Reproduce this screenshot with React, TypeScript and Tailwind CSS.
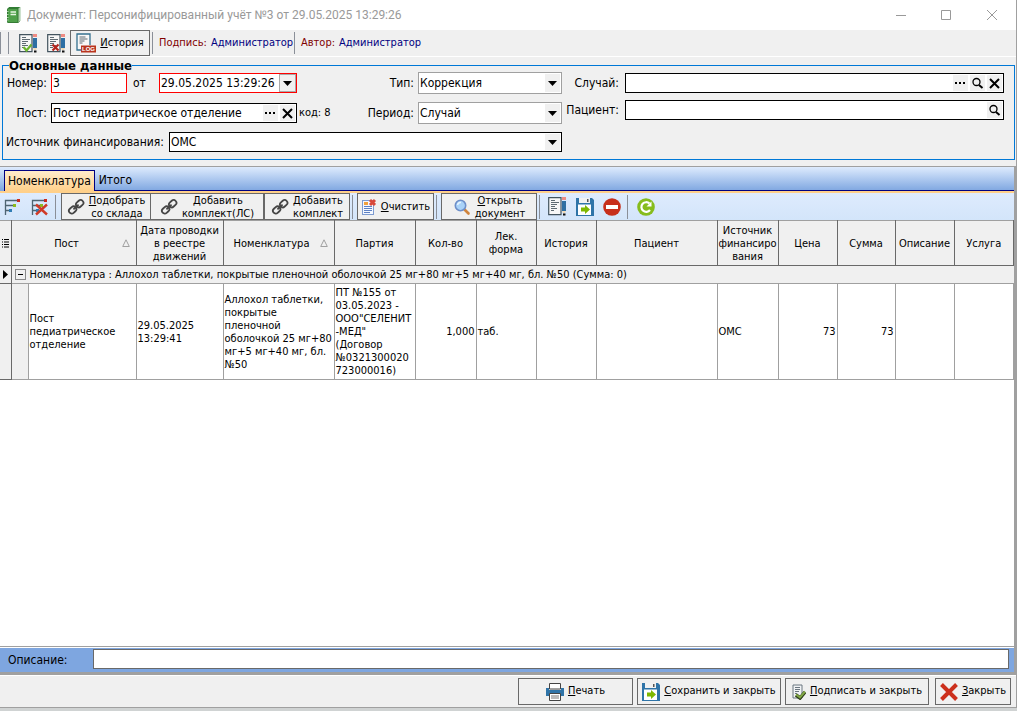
import { ReactNode, useState } from 'react';
import clsx from 'clsx';

interface Column {
    header: string;
    width: string;
    sorted?: boolean;
    align?: 'left' | 'right';
    value?: string;
}

const columns: Column[] = [
    { header: 'Пост', width: 'w-[125px]', sorted: true, value: 'Пост педиатрическое отделение' },
    { header: 'Дата проводки в реестре движений', width: 'w-[87px]', value: '29.05.2025 13:29:41' },
    { header: 'Номенклатура', width: 'w-[111px]', sorted: true, value: 'Аллохол таблетки,\nпокрытые\nпленочной\nоболочкой 25 мг+80\nмг+5 мг+40 мг, бл.\n№50' },
    { header: 'Партия', width: 'w-[81px]', value: 'ПТ №155 от\n03.05.2023 -\nООО"СЕЛЕНИТ\n-МЕД"\n(Договор\n№0321300020\n723000016)' },
    { header: 'Кол-во', width: 'w-[61px]', align: 'right', value: '1,000' },
    { header: 'Лек. форма', width: 'w-[60px]', value: 'таб.' },
    { header: 'История', width: 'w-[60px]' },
    { header: 'Пациент', width: 'w-[121px]' },
    { header: 'Источник\nфинансиро\nвания', width: 'w-[61px]', value: 'ОМС' },
    { header: 'Цена', width: 'w-[59px]', align: 'right', value: '73' },
    { header: 'Сумма', width: 'w-[58px]', align: 'right', value: '73' },
    { header: 'Описание', width: 'w-[59px]' },
    { header: 'Услуга', width: '' },
];

/* ---------- Icons ---------- */

function BookIcon() {
    return (
        <svg width="16" height="18" viewBox="0 0 16 18" className="shrink-0">
            <path d="M1.500 3l1.500-2h11v14l-2 2H1.500z" fill="#2f7d33" />
            <path d="M12 3l2-2v14l-2 2z" fill="#d8ecd5" stroke="#5c9a5a" strokeWidth=".6" />
            <rect x="1.500" y="2.500" width="10.500" height="14" rx="1" fill="#4fa04a" stroke="#357a35" />
            <path d="M4.500 6h5.500M4.500 8.500h5.500" stroke="#e6f5e2" strokeWidth="1.300" />
            <path d="M1 5.500h1.500M1 8.500h1.500M1 11.500h1.500M1 14h1.500" stroke="#cfe8cc" strokeWidth=".8" />
        </svg>
    );
}

function Sheet() {
    return (
        <>
            <path d="M.7.700h12.300v17H.7z" fill="#f7f7f7" stroke="#43545f" strokeWidth="1.200" />
            <path d="M3 3.500h4M3 5.500h8M3 7.500h6M3 9.500h4M3 11.500h6M3 13.500h3" stroke="#5f6b73" />
        </>
    );
}

function Pencil() {
    return (
        <>
            <path d="M14 0h4v3h-4z" fill="#ee8b83" />
            <path d="M14 4h4v10h-4z" fill="#2e6fa3" />
            <path d="M14 14h4l-1 2h-2z" fill="#f0d9b5" />
            <path d="M15 16.500h2.500v2H15z" fill="#111" />
        </>
    );
}

function DocIcon({ mark }: { mark?: 'check' | 'cross' }) {
    return (
        <svg width="19" height="19" viewBox="0 0 19 19" className="shrink-0">
            <Sheet />
            <Pencil />
            {mark === 'check' && <path d="M4.500 13l3 3.500 5-6" fill="none" stroke="#6cb52d" strokeWidth="2.200" />}
            {mark === 'cross' && <path d="M5.500 10.500l6 6M11.500 10.500l-6 6" stroke="#b3261e" strokeWidth="2.200" />}
        </svg>
    );
}

function LogIcon() {
    return (
        <svg width="20" height="20" viewBox="0 0 20 20" className="shrink-0">
            <path d="M5 17H1V1h13v11" fill="#f7f7f7" stroke="#35708f" strokeWidth="1.300" />
            <path d="M3.500 4h6M3.500 6h8M3.500 8h5M3.500 10h3" stroke="#5f6b73" />
            <rect x="5" y="12.500" width="15" height="7" fill="#b8341f" />
            <text x="6" y="18.200" fontSize="6" fontWeight="700" fontFamily="Liberation Sans, sans-serif" fill="#fff">LOG</text>
        </svg>
    );
}

function TreeIcon({ crossed }: { crossed?: boolean }) {
    return (
        <svg width="18" height="20" viewBox="0 0 18 20" className="shrink-0">
            <path d="M1.500 18V3.500H13M1.500 8.500h8M1.500 13.500h4" fill="none" stroke="#4e6472" strokeWidth="1.300" />
            <path d="M13 2h3v3h-3z" fill="#cc2b1f" />
            <path d="M9 7h3v3H9z" fill="#8dbb1e" />
            <path d="M5 12h3v3H5z" fill="#2f7db5" />
            {crossed && <path d="M5 7.500l11 10M16 7.500l-11 10" stroke="#cf3a28" strokeWidth="2.400" />}
        </svg>
    );
}

function ChainIcon() {
    return (
        <svg width="18" height="18" viewBox="0 0 18 18" className="shrink-0">
            <g fill="none" stroke="#454545" strokeWidth="1.800" transform="rotate(-42 9 9)">
                <rect x=".5" y="6.200" width="8" height="5.600" rx="2.800" />
                <rect x="10" y="6.200" width="8" height="5.600" rx="2.800" />
                <path d="M5.500 9h7" />
            </g>
        </svg>
    );
}

function ClearIcon() {
    return (
        <svg width="16" height="18" viewBox="0 0 16 18" className="shrink-0">
            <rect x="1.500" y="2.500" width="11" height="14" fill="#f4f8ff" stroke="#7d9bd0" />
            <rect x="3" y="4" width="4" height="3" fill="#f0a03c" />
            <path d="M3 8.500h8M3 10.500h8M3 12.500h8M3 14.500h6" stroke="#5c80c4" />
            <path d="M9 2l5 5M14 2L9 7" stroke="#d8483a" strokeWidth="3" />
        </svg>
    );
}

function LensIcon() {
    return (
        <svg width="18" height="18" viewBox="0 0 18 18" className="shrink-0">
            <path d="M11.500 11.500l4 4" stroke="#d0843c" strokeWidth="2.600" strokeLinecap="round" />
            <circle cx="7.500" cy="7.500" r="5.200" fill="#a9d2f8" stroke="#6e8fc9" strokeWidth="1.600" />
            <path d="M4.500 7A3.200 3.200 0 0 1 8 4.500" fill="none" stroke="#e6f4ff" strokeWidth="1.500" />
        </svg>
    );
}

function SaveIcon() {
    return (
        <svg width="18" height="18" viewBox="0 0 18 18" className="shrink-0">
            <path d="M0 0h16l2 2v16H0z" fill="#2f74a8" />
            <path d="M3 0h11v5H3z" fill="#f2f2f2" />
            <path d="M11 1h1.500v3H11z" fill="#555" />
            <path d="M2 6.500h13V17H2z" fill="#fff" />
            <path d="M5 9.500h4V7l5 4.500L9 16v-2.500H5z" fill="#7fb800" />
        </svg>
    );
}

function StopIcon() {
    return (
        <svg width="18" height="18" viewBox="0 0 18 18" className="shrink-0">
            <circle cx="9" cy="9" r="8.800" fill="#c72f1c" />
            <path d="M3 7h12v4H3z" fill="#fff" />
        </svg>
    );
}

function RefreshIcon() {
    return (
        <svg width="18" height="18" viewBox="0 0 18 18" className="shrink-0">
            <circle cx="9" cy="9" r="8.800" fill="#86bc1c" />
            <path d="M13 12A4.800 4.800 0 1 1 12.500 5.500" fill="none" stroke="#fff" strokeWidth="2.200" />
            <path d="M14.500 3.500v5h-5z" fill="#fff" />
        </svg>
    );
}

function PrinterIcon() {
    return (
        <svg width="18" height="18" viewBox="0 0 18 18" className="shrink-0">
            <path d="M3.500.500h11V6h-11z" fill="#fff" stroke="#444" />
            <path d="M0 5h3v2h12V5h3v8H0z" fill="#2f74a8" />
            <path d="M3.500 10.500h11v7h-11z" fill="#fff" stroke="#444" />
            <path d="M5 13h8M5 15h8" stroke="#777" />
        </svg>
    );
}

function SignIcon() {
    return (
        <svg width="14" height="16" viewBox="0 0 14 16" className="shrink-0">
            <path d="M1 1h9v13H1z" fill="#f1f3f5" stroke="#6b7680" />
            <path d="M3 3.500h5M3 5.500h5M3 7.500h4M3 9.500h2" stroke="#6b7680" />
            <path d="M4 11l4 3 5-6" fill="none" stroke="#2c3d18" strokeWidth="3.500" />
            <path d="M4 10.500l4 3 5-6" fill="none" stroke="#82a845" strokeWidth="2" />
        </svg>
    );
}

function CloseIcon() {
    return (
        <svg width="18" height="18" viewBox="0 0 18 18" className="shrink-0">
            <path d="M1.500 1.500l15 15M16.500 1.500l-15 15" stroke="#cc2f1c" strokeWidth="4" />
        </svg>
    );
}

/* ---------- Small controls ---------- */

const glyphs = {
    dots: <path d="M1 5h2v2H1zM5 5h2v2H5zM9 5h2v2H9z" fill="#000" />,
    cross: <path d="M2 2l9 9M11 2l-9 9" stroke="#000" strokeWidth="2" />,
    search: (
        <g fill="none" stroke="#000">
            <circle cx="5.500" cy="5" r="3.500" strokeWidth="1.300" />
            <path d="M8 8l3.500 3" strokeWidth="2" />
        </g>
    ),
};

function FieldButton({ kind, label }: { kind: keyof typeof glyphs; label: string }) {
    return (
        <button type="button" aria-label={label} className="flex h-4 w-[15px] shrink-0 items-center justify-center bg-[#f0f0f0]">
            <svg width="13" height="13" viewBox="0 0 13 13">{glyphs[kind]}</svg>
        </button>
    );
}

function ArrowDown() {
    return (
        <svg width="9" height="5" viewBox="0 0 9 5" className="shrink-0">
            <path d="M0 0h9L4.500 5z" fill="#000" />
        </svg>
    );
}

function SelectBox({ id, value, className }: { id: string; value: string; className?: string }) {
    return (
        <div className={clsx('grid border bg-white', className)}>
            <select id={id} className="col-start-1 row-start-1 w-full appearance-none px-px outline-none">
                <option>{value}</option>
            </select>
            <span className="pointer-events-none col-start-1 row-start-1 m-px flex w-[15px] items-center justify-center justify-self-end bg-[#f0f0f0]">
                <ArrowDown />
            </span>
        </div>
    );
}

function Separator() {
    return <span className="w-px shrink-0 self-stretch bg-[#8a8f98]" />;
}

function ToolButton({ icon, className, children }: { icon: ReactNode; className?: string; children: ReactNode }) {
    return (
        <button type="button" className={clsx('flex shrink-0 items-center justify-center gap-1 border border-[#696969] bg-[#f0f0f0] whitespace-nowrap', className)}>
            {icon}
            <span>{children}</span>
        </button>
    );
}

function TitleBar() {
    return (
        <header className="flex h-[30px] items-center bg-white pl-1.5 font-[Roboto,sans-serif] text-xs text-[#999]">
            <BookIcon />
            <h1 className="ml-[5px] flex-1 truncate">Документ: Персонифицированный учёт №3 от 29.05.2025 13:29:26</h1>
            <div className="flex">
                <button type="button" aria-label="Свернуть" className="flex w-[45px] justify-center">
                    <svg width="11" height="11" stroke="#999"><path d="M0 5.500h10" /></svg>
                </button>
                <button type="button" aria-label="Развернуть" className="flex w-[45px] justify-center">
                    <svg width="11" height="11" fill="none" stroke="#999"><path d="M.5.500h9v9h-9z" /></svg>
                </button>
                <button type="button" aria-label="Закрыть окно" className="flex w-[47px] justify-center">
                    <svg width="11" height="11" stroke="#999"><path d="M0 0l10 10M10 0L0 10" /></svg>
                </button>
            </div>
        </header>
    );
}

function DocumentToolbar() {
    return (
        <div className="flex h-[27px] items-center border-b border-white text-[11px]">
            <div className="flex h-[22px] items-center">
                <Separator />
                <span className="w-[7px]" />
                <Separator />
            </div>
            <button type="button" aria-label="Подписать" className="ml-2.5"><DocIcon mark="check" /></button>
            <button type="button" aria-label="Снять подпись" className="mr-1 ml-[9px]"><DocIcon mark="cross" /></button>
            <ToolButton icon={<LogIcon />} className="h-[26px] w-20"><u>И</u>стория</ToolButton>
            <div className="ml-0.5 flex h-[22px] items-center">
                <Separator />
                <span className="w-[52px] pt-px pl-1.5 text-[#800000]">Подпись:</span>
                <span className="w-[89px] pt-px pl-1.5 text-[#000080]">Администратор</span>
                <Separator />
                <span className="w-[44px] pt-px pl-1.5 text-[#800000]">Автор:</span>
                <span className="pt-px text-[#000080]">Администратор</span>
            </div>
        </div>
    );
}

function MainData() {
    return (
        <fieldset className="mt-0.5 mr-px mb-1.5 ml-0.5 min-w-0 border border-[#0078d7] pb-[7px] text-xs">
            <legend className="ml-1.5 text-[13px] leading-[13px] font-bold">Основные данные</legend>
            <div className="flex">
                <div className="flex w-[559px] shrink-0 flex-col gap-2">
                    <div className="flex h-[22px] items-center">
                        <label htmlFor="number" className="w-[48px] shrink-0 pr-1 text-right">Номер:</label>
                        <input id="number" defaultValue="3" className="h-5 w-[76px] border border-[#f00] bg-white px-px outline-none" />
                        <label htmlFor="date" className="w-8 shrink-0 pl-1.5">от</label>
                        <div className="flex h-5 w-[138px] border border-[#f00] bg-white">
                            <input id="date" defaultValue="29.05.2025 13:29:26" className="min-w-0 flex-1 pl-px outline-none" />
                            <button type="button" aria-label="Календарь" className="flex w-[17px] items-center justify-center border border-[#aaa] bg-[#f0f0f0]">
                                <ArrowDown />
                            </button>
                        </div>
                        <label htmlFor="type" className="flex-1 pr-1 text-right">Тип:</label>
                        <SelectBox id="type" value="Коррекция" className="h-[22px] w-36 border-[#a0a0a0]" />
                    </div>
                    <div className="flex h-[22px] items-center">
                        <label htmlFor="post" className="w-[48px] shrink-0 pr-1 text-right">Пост:</label>
                        <div className="flex h-5 w-[246px] items-center gap-0.5 border border-black bg-white pr-px">
                            <input id="post" defaultValue="Пост педиатрическое отделение" className="min-w-0 flex-1 pl-px outline-none" />
                            <FieldButton kind="dots" label="Выбрать пост" />
                            <FieldButton kind="cross" label="Очистить пост" />
                        </div>
                        <span className="pl-0.5 text-[11px]">код: 8</span>
                        <label htmlFor="period" className="flex-1 pr-1 text-right">Период:</label>
                        <SelectBox id="period" value="Случай" className="h-[22px] w-36 border-[#a0a0a0]" />
                    </div>
                    <div className="flex h-5 items-center">
                        <label htmlFor="source" className="w-[166px] shrink-0 pl-[3px] whitespace-nowrap">Источник финансирования:</label>
                        <SelectBox id="source" value="ОМС" className="h-5 flex-1 border-black" />
                    </div>
                </div>
                <div className="flex min-w-0 flex-1 flex-col gap-[7px] pt-px pr-2.5">
                    <div className="flex h-5 items-center">
                        <label htmlFor="case" className="w-[63px] shrink-0 pr-1.5 text-right">Случай:</label>
                        <div className="flex h-5 min-w-0 flex-1 items-center gap-0.5 border border-black bg-white pr-px">
                            <input id="case" className="min-w-0 flex-1 outline-none" />
                            <FieldButton kind="dots" label="Выбрать случай" />
                            <FieldButton kind="search" label="Открыть случай" />
                            <FieldButton kind="cross" label="Очистить случай" />
                        </div>
                    </div>
                    <div className="flex h-5 items-center">
                        <label htmlFor="patient" className="w-[63px] shrink-0 pr-1.5 text-right">Пациент:</label>
                        <div className="flex h-5 min-w-0 flex-1 items-center border border-black bg-white pr-px">
                            <input id="patient" className="min-w-0 flex-1 outline-none" />
                            <FieldButton kind="search" label="Открыть пациента" />
                        </div>
                    </div>
                </div>
            </div>
        </fieldset>
    );
}

function Tabs() {
    const [active, setActive] = useState(0);
    return (
        <div role="tablist" className="flex h-[27px] items-end border-t border-b-2 border-t-[#a0a0a0] border-b-[#ffd08a] bg-linear-to-b from-[#deebfd] to-[#7ea6e0] pl-1 text-xs">
            {['Номенклатура', 'Итого'].map((name, i) => (
                <button
                    key={name}
                    type="button"
                    role="tab"
                    aria-selected={active === i}
                    onClick={() => setActive(i)}
                    className={clsx(
                        'h-[21px] border-[#000080]',
                        active === i ? 'border-x border-t bg-linear-to-b from-[#ffeccb] to-[#ffd08a] px-[3px]' : 'border-b px-1'
                    )}
                >
                    {name}
                </button>
            ))}
            <span className="h-px flex-1 bg-[#000080]" />
        </div>
    );
}

function GridToolbar() {
    return (
        <div className="flex h-[27px] items-center bg-linear-to-b from-[#deebfd] to-[#d3e5fa] text-[11px] leading-[13px]">
            <div className="flex h-6 items-center">
                <button type="button" aria-label="Развернуть группы" className="ml-1"><TreeIcon /></button>
                <button type="button" aria-label="Свернуть группы" className="mr-1.5 ml-[9px]"><TreeIcon crossed /></button>
                <Separator />
            </div>
            <ToolButton icon={<ChainIcon />} className="ml-[5px] h-[27px] w-[90px]"><u>П</u>одобрать<br />со склада</ToolButton>
            <ToolButton icon={<ChainIcon />} className="-ml-px h-[27px] w-[114px]"><u>Д</u>обавить<br />комплект(ЛС)</ToolButton>
            <ToolButton icon={<ChainIcon />} className="h-[27px] w-[86px]"><u>Д</u>обавить<br />комплект</ToolButton>
            <div className="mr-1 ml-0.5 flex h-6"><Separator /></div>
            <ToolButton icon={<ClearIcon />} className="h-[27px] w-[77px]"><u>О</u>чистить</ToolButton>
            <div className="mr-1 ml-0.5 flex h-6"><Separator /></div>
            <ToolButton icon={<LensIcon />} className="h-[27px] w-24"><u>О</u>ткрыть<br />документ</ToolButton>
            <div className="ml-0.5 flex h-6 items-center">
                <Separator />
                <div className="mr-1.5 ml-2 flex gap-[9px]">
                    <button type="button" aria-label="Редактировать"><DocIcon /></button>
                    <button type="button" aria-label="Сохранить"><SaveIcon /></button>
                    <button type="button" aria-label="Удалить"><StopIcon /></button>
                </div>
                <Separator />
                <button type="button" aria-label="Обновить" className="ml-[9px]"><RefreshIcon /></button>
            </div>
        </div>
    );
}

function NomenclatureTable() {
    return (
        <table className="w-full table-fixed border-collapse text-[11px] leading-[13px]">
            <colgroup>
                <col className="w-[11px]" />
                <col className="w-[17px]" />
                <col className="w-[108px]" />
                {columns.slice(1).map((col) => (
                    <col key={col.header} className={col.width} />
                ))}
            </colgroup>
            <thead>
                <tr className="h-[45px] bg-[#f0f0f0]">
                    <th className="border-y border-r border-[#696969] border-t-[#a0a0a0]">
                        <svg width="7" height="9" viewBox="0 0 7 9" stroke="#000" className="mx-auto">
                            <path d="M0 .5h1M2 .5h5M0 3h1M2 3h5M0 5.500h1M2 5.500h5M0 8h1M2 8h5" />
                        </svg>
                    </th>
                    {columns.map((col, idx) => (
                        <th key={col.header} colSpan={idx === 0 ? 2 : 1} className="border border-[#696969] border-t-[#a0a0a0] p-0 font-normal whitespace-pre-line">
                            <div className="flex items-center">
                                <span className="min-w-0 flex-1">{col.header}</span>
                                {col.sorted && (
                                    <svg width="8" height="8" viewBox="0 0 8 8" fill="none" stroke="#a0a0a0" className="mr-1.5 shrink-0">
                                        <path d="M4 .8L7.300 7.500H.7z" />
                                    </svg>
                                )}
                            </div>
                        </th>
                    ))}
                </tr>
            </thead>
            <tbody>
                <tr className="h-[18px] bg-[#f0f0f0]">
                    <td className="border-r border-b border-[#696969] p-0">
                        <svg width="5" height="9" viewBox="0 0 5 9" className="mx-auto"><path d="M0 0v9l5-4.500z" fill="#000" /></svg>
                    </td>
                    <td colSpan={columns.length + 1} className="border-b border-[#a0a0a0] p-0">
                        <div className="flex items-center gap-1 pl-[3px]">
                            <button type="button" aria-label="Свернуть группу" className="flex size-[11px] items-center justify-center border border-[#8a8a8a]">
                                <span className="h-px w-[5px] bg-black" />
                            </button>
                            <span>Номенклатура : Аллохол таблетки, покрытые пленочной оболочкой 25 мг+80 мг+5 мг+40 мг, бл. №50 (Сумма: 0)</span>
                        </div>
                    </td>
                </tr>
                <tr className="h-24 bg-white">
                    <td className="border-r border-b border-[#696969] bg-[#f0f0f0]" />
                    <td className="border-b border-[#a0a0a0] bg-[#f0f0f0]" />
                    {columns.map((col) => (
                        <td key={col.header} className={clsx('border border-[#a0a0a0] px-px py-0 whitespace-pre-line', col.align === 'right' && 'text-right')}>
                            {col.value}
                        </td>
                    ))}
                </tr>
            </tbody>
        </table>
    );
}

function Footer() {
    return (
        <footer className="flex justify-end gap-1 border-t border-b border-t-white border-b-[#a0a0a0] bg-[#f0f0f0] pt-0.5 pr-[5px] pb-0.5 text-[11px]">
            <ToolButton icon={<PrinterIcon />} className="h-[27px] w-[115px]"><u>П</u>ечать</ToolButton>
            <ToolButton icon={<SaveIcon />} className="h-[27px] w-36"><u>С</u>охранить и закрыть</ToolButton>
            <ToolButton icon={<SignIcon />} className="h-[27px] w-36"><u>П</u>одписать и закрыть</ToolButton>
            <ToolButton icon={<CloseIcon />} className="ml-0.5 h-[27px] w-[76px]"><u>З</u>акрыть</ToolButton>
        </footer>
    );
}

export default function App() {
    return (
        <div className="flex min-h-screen flex-col bg-[#d0d3d3] pb-[3px] font-['DejaVu_Sans_Condensed','DejaVu_Sans',sans-serif] text-black">
            <div className="flex flex-1 flex-col border-r border-[#a0a0a0] bg-[#f0f0f0]">
                <TitleBar />
                <DocumentToolbar />
                <MainData />
                <main className="flex flex-1 flex-col border-r-2 border-[#a0a0a0] bg-white">
                    <Tabs />
                    <GridToolbar />
                    <NomenclatureTable />
                    <div className="flex-1" />
                    <div className="border-t border-[#a0a0a0] pt-px">
                        <div className="flex h-6 bg-[#7ea6e0] pr-[5px] pl-2 text-xs">
                            <label htmlFor="description" className="w-[85px] self-center">Описание:</label>
                            <input id="description" className="mt-px h-5 min-w-0 flex-1 border border-[#696969] bg-white px-1 outline-none" />
                        </div>
                    </div>
                    <div className="h-[3px] bg-[#a0a0a0]" />
                </main>
                <Footer />
            </div>
        </div>
    );
}
